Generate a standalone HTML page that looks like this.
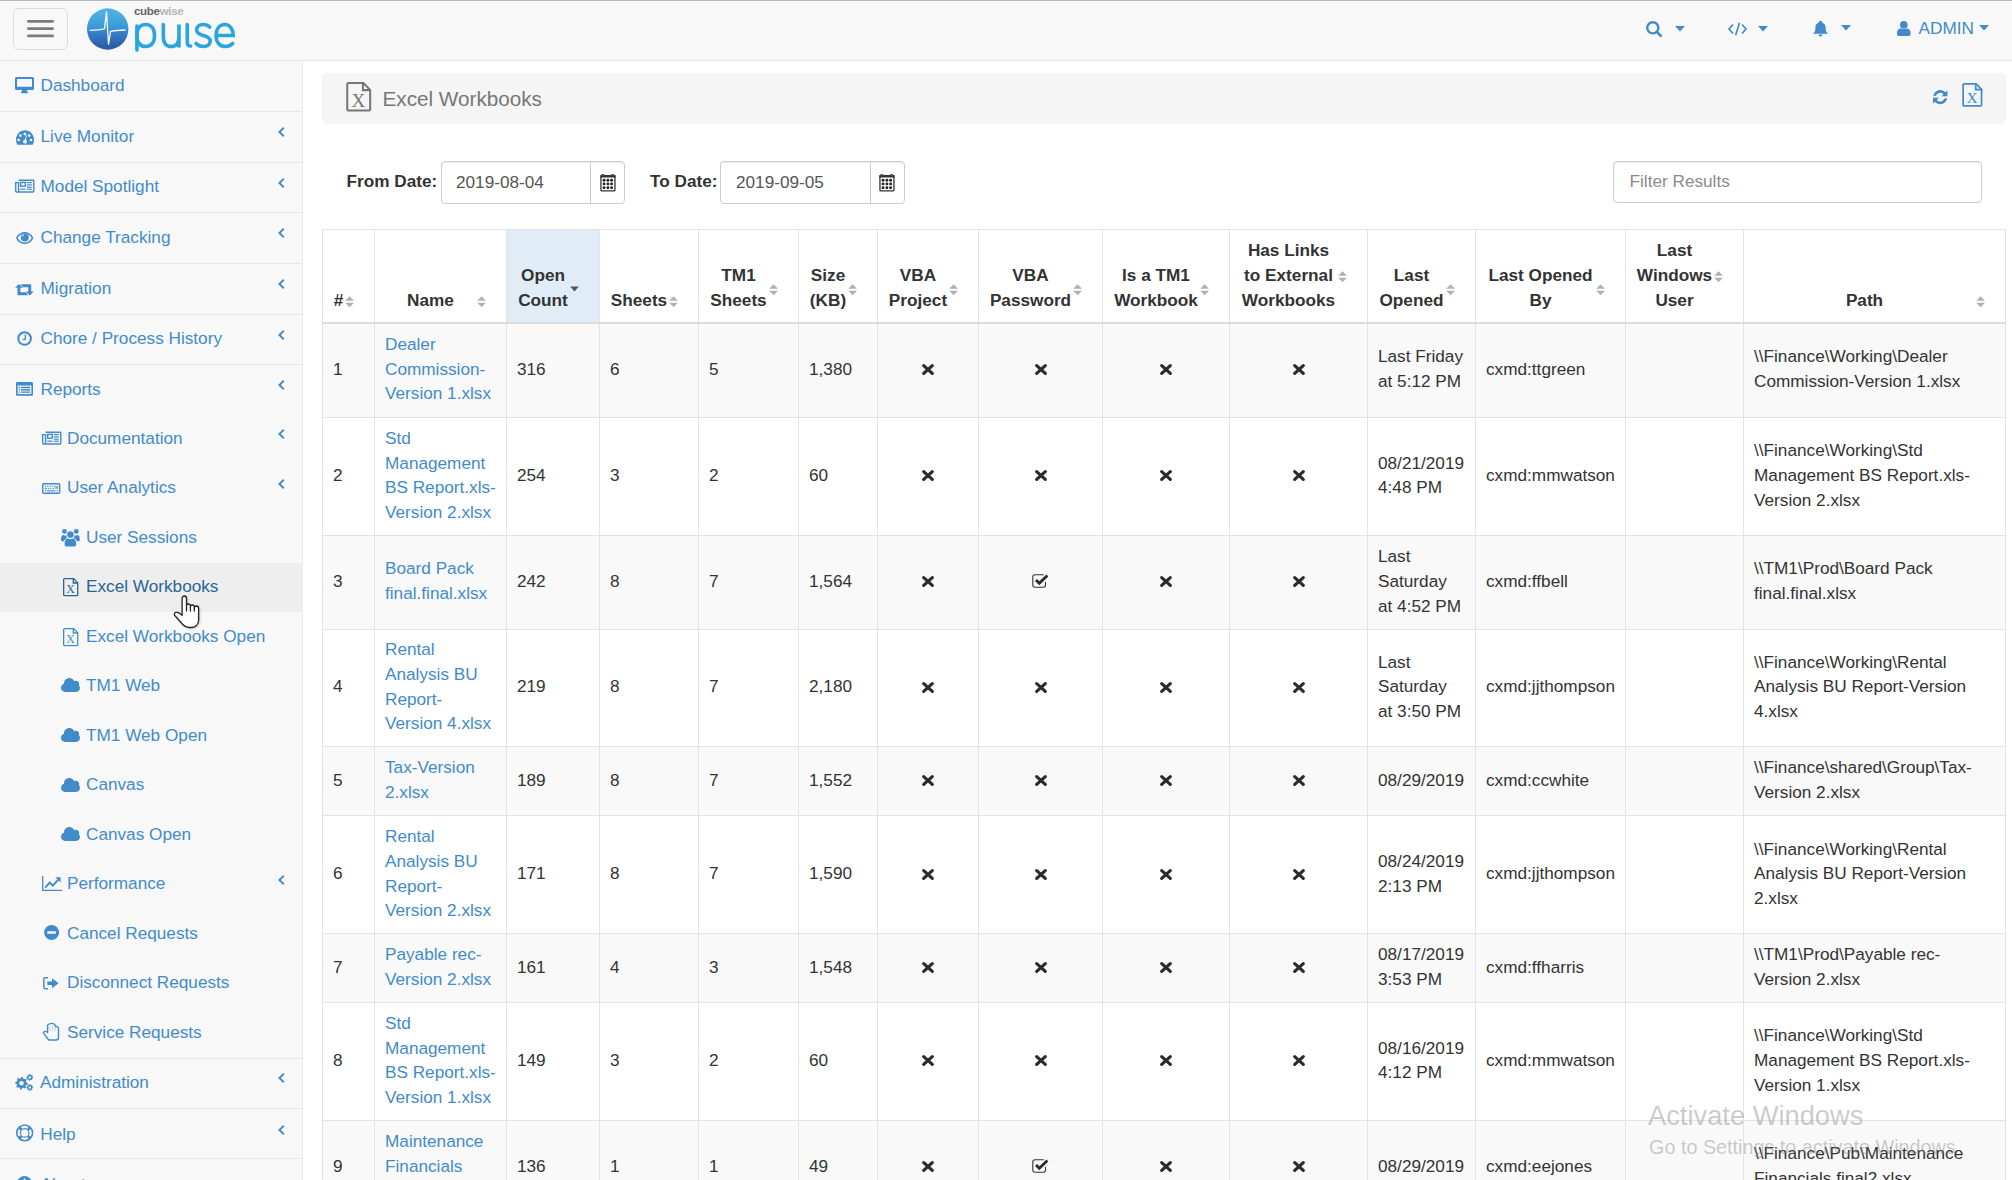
<!DOCTYPE html><html><head><meta charset="utf-8"><title>Excel Workbooks</title><style>
*{box-sizing:border-box;}
html,body{margin:0;padding:0;}
body{width:2012px;height:1180px;overflow:hidden;position:relative;background:#fff;
font-family:"Liberation Sans",sans-serif;font-size:17.2px;color:#333;}
.abs{position:absolute;}
svg{position:absolute;display:block;overflow:visible;}
#topline{left:0;top:0;width:2012px;height:1px;background:#b9b9b9;}
#hdr{left:0;top:1px;width:2012px;height:60px;background:#f8f8f8;border-bottom:1px solid #e6e6e6;}
#side{left:0;top:61px;width:303px;height:1119px;background:#f8f8f8;border-right:1px solid #eaeaea;}
.sep{position:absolute;left:0;width:302px;height:1px;background:#e7e7e7;}
.it{position:absolute;white-space:nowrap;line-height:24px;height:24px;color:#428bca;}
.chev{position:absolute;left:278px;}
.ttl{position:absolute;left:322px;top:73px;width:1684px;height:51px;background:#f5f5f5;border-radius:5px;}
.lbl{position:absolute;font-weight:bold;white-space:nowrap;line-height:24px;}
.inp{position:absolute;border:1px solid #ccc;border-radius:4px;background:#fff;box-shadow:inset 0 1px 1px rgba(0,0,0,.075);}
.inp .tx{position:absolute;line-height:24px;white-space:nowrap;color:#555;}
.inp .dv{position:absolute;top:0;bottom:0;width:1px;background:#ccc;}
table.dt{position:absolute;left:322px;top:229px;border-collapse:collapse;table-layout:fixed;width:1684px;}
table.dt th,table.dt td{border:1px solid #e3e3e3;padding:0 10px;line-height:24.7px;white-space:nowrap;overflow:visible;}
table.dt th{font-weight:bold;text-align:center;vertical-align:bottom;padding-bottom:9px;border-bottom:2px solid #dcdcdc;color:#333;}
table.dt th .in{position:relative;padding-right:20px;}
table.dt th .so{position:absolute;right:10px;top:50%;margin-top:-4px;width:9px;height:12px;}
table.dt th.sorted{background:#e1edf6;}
table.dt td{vertical-align:middle;text-align:left;padding-bottom:2.4px;}
table.dt tr.odd td{background:#f9f9f9;}
table.dt tr.even td{background:#fff;}
table.dt td.c{text-align:center;}
table.dt a{color:#428bca;text-decoration:none;}
#wm1{position:absolute;left:1648px;top:1099px;font-size:27.3px;line-height:34px;color:rgba(130,130,130,.42);white-space:nowrap;}
#wm2{position:absolute;left:1649px;top:1134px;font-size:19.8px;line-height:26px;color:rgba(130,130,130,.42);white-space:nowrap;}
</style></head><body><div id="topline" class="abs"></div>
<div id="hdr" class="abs"></div>
<div class="abs" style="left:13px;top:8px;width:55px;height:42px;border:1px solid #dcdcdc;border-radius:6px;"></div>
<svg style="left:26px;top:18px;width:29px;height:21px" viewBox="0 0 29 21" ><path d="M2.35 3.40 H26.65" stroke="#7c7c7c" stroke-width="2.7" stroke-linecap="round"/><path d="M2.35 10.60 H26.65" stroke="#7c7c7c" stroke-width="2.7" stroke-linecap="round"/><path d="M2.35 17.90 H26.65" stroke="#7c7c7c" stroke-width="2.7" stroke-linecap="round"/></svg>
<svg style="left:87px;top:8px;width:41.4px;height:42px" viewBox="0 0 41.4 42" ><defs><linearGradient id="lg" x1="0" y1="0" x2="0" y2="1">
<stop offset="0" stop-color="#4fb6e6"/><stop offset="0.45" stop-color="#3a9ad8"/><stop offset="0.55" stop-color="#3585cc"/><stop offset="1" stop-color="#2a55a0"/></linearGradient></defs>
<circle cx="20.7" cy="21" r="20.7" fill="url(#lg)"/>
<path d="M2.5 22.3 C8 22.2 13 22 17.5 20.8 L19.5 3.8 L21.5 36.2 L23.5 23.3 C27 22.2 32 22.4 38.7 22.0" fill="none" stroke="#fff" stroke-width="1.3" stroke-linejoin="round" opacity="0.95"/></svg>
<div class="abs" style="left:134px;top:4px;font-size:11.5px;font-weight:bold;line-height:14px;letter-spacing:-0.3px;white-space:nowrap;"><span style="color:#666">cube</span><span style="color:#b5b5b5">wise</span></div>
<svg style="left:135px;top:23px;width:102px;height:30px" viewBox="0 0 102 30" ><g fill="none" stroke="#29a6de" stroke-width="3.7" stroke-linecap="round" transform="scale(0.977 1)">
<path d="M2 3 V27"/><path d="M2 12 C2 5 6 1.5 11 1.5 C16.5 1.5 20 5.5 20 12.5 C20 19.5 16.5 23.5 11 23.5 C6 23.5 2 20 2 13"/>
<path d="M29 1.5 V14 C29 20 32 23.5 37 23.5 C42 23.5 45 20 45 14 V1.5 V23"/>
<path d="M53.5 1.5 V19 C53.5 22 54.5 23 57 23"/>
<path d="M76.5 4 C74.5 2 72 1.5 69.5 1.5 C66 1.5 63 3.5 63 7 C63 10.5 66 11.5 70 12.5 C74 13.5 77 14.5 77 18 C77 21.5 74 23.5 70 23.5 C67 23.5 64.5 22.5 62.5 20.5"/>
<path d="M84 12.5 H100.5 C100.5 6 97 1.5 92 1.5 C86.5 1.5 83 6 83 12.5 C83 19 86.5 23.5 92.5 23.5 C95.5 23.5 98 22.5 100 20.5"/>
</g></svg>
<svg style="left:1645px;top:20px;width:18px;height:18px" viewBox="0 0 18 18" ><circle cx="7.8" cy="7.8" r="5.6" fill="none" stroke="#428bca" stroke-width="2.4"/><path d="M11.8 11.8 L15.8 15.8" stroke="#428bca" stroke-width="2.6" stroke-linecap="round"/></svg>
<svg style="left:1675px;top:25.5px;width:10px;height:5.6px" viewBox="0 0 10 5.6" ><path d="M0 0 H10 L5.0 5.6 Z" fill="#428bca"/></svg>
<svg style="left:1728px;top:22px;width:19px;height:14px" viewBox="0 0 19 14" ><g fill="none" stroke="#428bca" stroke-width="1.7"><path d="M5 2.5 L1 7 L5 11.5"/><path d="M14 2.5 L18 7 L14 11.5"/><path d="M11.5 0.8 L7.6 13.2"/></g></svg>
<svg style="left:1758px;top:25.5px;width:10px;height:5.6px" viewBox="0 0 10 5.6" ><path d="M0 0 H10 L5.0 5.6 Z" fill="#428bca"/></svg>
<svg style="left:1812px;top:20px;width:17px;height:17px" viewBox="0 0 17 17" ><path d="M8.5 0.8 C9.6 0.8 10.2 1.6 10.2 2.4 C12.8 3.2 13.7 5.6 13.7 8.4 C13.7 11.2 14.6 12.4 16.2 13.8 H0.8 C2.4 12.4 3.3 11.2 3.3 8.4 C3.3 5.6 4.2 3.2 6.8 2.4 C6.8 1.6 7.4 0.8 8.5 0.8 Z M6.6 14.5 H10.4 C10.4 15.6 9.6 16.6 8.5 16.6 C7.4 16.6 6.6 15.6 6.6 14.5 Z" fill="#428bca"/></svg>
<svg style="left:1841px;top:25.4px;width:10px;height:5.6px" viewBox="0 0 10 5.6" ><path d="M0 0 H10 L5.0 5.6 Z" fill="#428bca"/></svg>
<svg style="left:1897px;top:21px;width:14px;height:15px" viewBox="0 0 14 15" ><circle cx="6.8" cy="3.9" r="3.8" fill="#428bca"/><path d="M0 13 C0 9 1.5 7.6 4 7.6 C5 8.3 8.6 8.3 9.6 7.6 C12.1 7.6 13.6 9 13.6 13 C13.6 14.3 12.8 15 11.8 15 H1.8 C0.8 15 0 14.3 0 13 Z" fill="#428bca"/></svg>
<div class="abs" style="left:1918.5px;top:16.3px;line-height:24px;font-size:17.2px;color:#428bca;white-space:nowrap;">ADMIN</div>
<svg style="left:1979px;top:25.4px;width:10px;height:5.6px" viewBox="0 0 10 5.6" ><path d="M0 0 H10 L5.0 5.6 Z" fill="#428bca"/></svg>
<div id="side" class="abs"></div>
<div class="sep" style="top:111px"></div>
<div class="sep" style="top:162px"></div>
<div class="sep" style="top:212px"></div>
<div class="sep" style="top:263px"></div>
<div class="sep" style="top:314px"></div>
<div class="sep" style="top:364px"></div>
<div class="sep" style="top:1058px"></div>
<div class="sep" style="top:1108px"></div>
<div class="sep" style="top:1158px"></div>
<div class="abs" style="left:0;top:563.3px;width:302px;height:48.7px;background:#eeeeee;"></div>
<div class="it" style="left:40.5px;top:73.15px;color:#428bca">Dashboard</div>
<div class="it" style="left:40.5px;top:123.79px;color:#428bca">Live Monitor</div>
<svg style="left:278px;top:126.99000000000001px;width:7px;height:10px" viewBox="0 0 7 10" ><path d="M5.8 0.8 L1.4 5 L5.8 9.2" fill="none" stroke="#428bca" stroke-width="1.9"/></svg>
<div class="it" style="left:40.5px;top:174.43px;color:#428bca">Model Spotlight</div>
<svg style="left:278px;top:177.63000000000002px;width:7px;height:10px" viewBox="0 0 7 10" ><path d="M5.8 0.8 L1.4 5 L5.8 9.2" fill="none" stroke="#428bca" stroke-width="1.9"/></svg>
<div class="it" style="left:40.5px;top:225.07px;color:#428bca">Change Tracking</div>
<svg style="left:278px;top:228.27px;width:7px;height:10px" viewBox="0 0 7 10" ><path d="M5.8 0.8 L1.4 5 L5.8 9.2" fill="none" stroke="#428bca" stroke-width="1.9"/></svg>
<div class="it" style="left:40.5px;top:275.71px;color:#428bca">Migration</div>
<svg style="left:278px;top:278.90999999999997px;width:7px;height:10px" viewBox="0 0 7 10" ><path d="M5.8 0.8 L1.4 5 L5.8 9.2" fill="none" stroke="#428bca" stroke-width="1.9"/></svg>
<div class="it" style="left:40.5px;top:326.35px;color:#428bca">Chore / Process History</div>
<svg style="left:278px;top:329.54999999999995px;width:7px;height:10px" viewBox="0 0 7 10" ><path d="M5.8 0.8 L1.4 5 L5.8 9.2" fill="none" stroke="#428bca" stroke-width="1.9"/></svg>
<div class="it" style="left:40.5px;top:376.99px;color:#428bca">Reports</div>
<svg style="left:278px;top:380.19px;width:7px;height:10px" viewBox="0 0 7 10" ><path d="M5.8 0.8 L1.4 5 L5.8 9.2" fill="none" stroke="#428bca" stroke-width="1.9"/></svg>
<div class="it" style="left:67px;top:425.80px;color:#428bca">Documentation</div>
<svg style="left:278px;top:429.0px;width:7px;height:10px" viewBox="0 0 7 10" ><path d="M5.8 0.8 L1.4 5 L5.8 9.2" fill="none" stroke="#428bca" stroke-width="1.9"/></svg>
<div class="it" style="left:67px;top:475.30px;color:#428bca">User Analytics</div>
<svg style="left:278px;top:478.5px;width:7px;height:10px" viewBox="0 0 7 10" ><path d="M5.8 0.8 L1.4 5 L5.8 9.2" fill="none" stroke="#428bca" stroke-width="1.9"/></svg>
<div class="it" style="left:86px;top:524.80px;color:#428bca">User Sessions</div>
<div class="it" style="left:86px;top:574.30px;color:#2a6496">Excel Workbooks</div>
<div class="it" style="left:86px;top:623.80px;color:#428bca">Excel Workbooks Open</div>
<div class="it" style="left:86px;top:673.30px;color:#428bca">TM1 Web</div>
<div class="it" style="left:86px;top:722.80px;color:#428bca">TM1 Web Open</div>
<div class="it" style="left:86px;top:772.30px;color:#428bca">Canvas</div>
<div class="it" style="left:86px;top:821.80px;color:#428bca">Canvas Open</div>
<div class="it" style="left:67px;top:871.30px;color:#428bca">Performance</div>
<svg style="left:278px;top:874.5px;width:7px;height:10px" viewBox="0 0 7 10" ><path d="M5.8 0.8 L1.4 5 L5.8 9.2" fill="none" stroke="#428bca" stroke-width="1.9"/></svg>
<div class="it" style="left:67px;top:920.80px;color:#428bca">Cancel Requests</div>
<div class="it" style="left:67px;top:970.30px;color:#428bca">Disconnect Requests</div>
<div class="it" style="left:67px;top:1019.80px;color:#428bca">Service Requests</div>
<div class="it" style="left:40px;top:1070.00px;color:#428bca">Administration</div>
<svg style="left:278px;top:1073.2px;width:7px;height:10px" viewBox="0 0 7 10" ><path d="M5.8 0.8 L1.4 5 L5.8 9.2" fill="none" stroke="#428bca" stroke-width="1.9"/></svg>
<div class="it" style="left:40.3px;top:1121.60px;color:#428bca">Help</div>
<svg style="left:278px;top:1124.8000000000002px;width:7px;height:10px" viewBox="0 0 7 10" ><path d="M5.8 0.8 L1.4 5 L5.8 9.2" fill="none" stroke="#428bca" stroke-width="1.9"/></svg>
<div class="it" style="left:40.5px;top:1172.00px;color:#428bca">About</div>
<svg style="left:15px;top:76.5px;width:19px;height:16.5px" viewBox="0 0 19 16.5" ><path fill="#428bca" fill-rule="evenodd" d="M1.5 0 H17.5 C18.3 0 19 0.7 19 1.5 V11.5 C19 12.3 18.3 13 17.5 13 H12 V15 H7 V13 H1.5 C0.7 13 0 12.3 0 11.5 V1.5 C0 0.7 0.7 0 1.5 0 Z M2 2 V9.8 H17 V2 Z"/><rect x="6" y="14.6" width="7" height="1.7" rx="0.5" fill="#428bca"/></svg>
<svg style="left:15.5px;top:129.5px;width:18px;height:15px" viewBox="0 0 18 15" ><path fill="#428bca" fill-rule="evenodd" d="M9 0.3 C14 0.3 18 4.5 18 9.8 C18 11.6 17.5 13.3 16.7 14.7 H1.3 C0.5 13.3 0 11.6 0 9.8 C0 4.5 4 0.3 9 0.3 Z M9 3 A1.2 1.2 0 1 0 9.01 3 Z"/><g fill="#f8f8f8"><circle cx="8.8" cy="3.8" r="1.3"/><circle cx="4.4" cy="5.6" r="1.3"/><circle cx="13.2" cy="5.6" r="1.3"/><circle cx="2.6" cy="10" r="1.3"/><circle cx="15" cy="10" r="1.3"/><circle cx="9" cy="11.7" r="1.9"/><path d="M8.4 11.5 L10.3 5 L10.9 5.2 L9.6 11.8 Z"/></g></svg>
<svg style="left:15px;top:179px;width:19.5px;height:14px" viewBox="0 0 19.5 14" ><g fill="none" stroke="#428bca" stroke-width="1.4"><path d="M3.6 1.2 H18.1 C18.5 1.2 18.8 1.5 18.8 1.9 V12.1 C18.8 12.6 18.4 13 17.9 13 H1.9 C1.2 13 0.7 12.5 0.7 11.8 V3.6 H3.6 V12.6"/><rect x="5.7" y="3.4" width="4.6" height="3.8"/></g><g fill="#428bca"><rect x="11.8" y="3" width="5" height="1.2"/><rect x="11.8" y="5.3" width="5" height="1.2"/><rect x="11.8" y="7.6" width="5" height="1.2"/><rect x="5.2" y="9.6" width="5.3" height="1.2"/><rect x="11.8" y="9.6" width="5" height="1.2"/></g></svg>
<svg style="left:15.9px;top:231.7px;width:17.4px;height:12.1px" viewBox="0 0 17.4 12.1" ><path fill="#428bca" fill-rule="evenodd" d="M8.7 0 C12.6 0 15.8 2.4 17.4 6.05 C15.8 9.7 12.6 12.1 8.7 12.1 C4.8 12.1 1.6 9.7 0 6.05 C1.6 2.4 4.8 0 8.7 0 Z M8.7 1.5 C5.6 1.5 3.1 3.3 1.7 6.05 C3.1 8.8 5.6 10.6 8.7 10.6 C11.8 10.6 14.3 8.8 15.7 6.05 C14.3 3.3 11.8 1.5 8.7 1.5 Z"/><circle cx="8.8" cy="5.6" r="4" fill="#428bca"/><path d="M6.3 4.6 C6.6 3.5 7.2 3 8 2.6" stroke="#f8f8f8" stroke-width="0.9" fill="none"/></svg>
<svg style="left:15.3px;top:283.5px;width:18.7px;height:11.4px" viewBox="0 0 18.7 11.4" ><g fill="#428bca"><path d="M4 0 L7.8 3.8 H5.4 V8.2 H11 L13 11.2 H3.3 C2.8 11.2 2.5 10.9 2.5 10.4 V3.8 H0 Z"/><path d="M14.7 11.4 L10.9 7.6 H13.3 V3.2 H7.7 L5.7 0.2 H15.4 C15.9 0.2 16.2 0.5 16.2 1 V7.6 H18.7 Z"/></g></svg>
<svg style="left:17px;top:331px;width:15.2px;height:15px" viewBox="0 0 15.2 15" ><circle cx="7.6" cy="7.5" r="6.3" fill="none" stroke="#428bca" stroke-width="2"/><path d="M8.3 3.5 V8.3 H5.6" fill="none" stroke="#428bca" stroke-width="1.3"/></svg>
<svg style="left:16.2px;top:381.7px;width:17px;height:13.7px" viewBox="0 0 17 13.7" ><path fill="#428bca" fill-rule="evenodd" d="M1.3 0 H15.7 C16.4 0 17 0.6 17 1.3 V12.4 C17 13.1 16.4 13.7 15.7 13.7 H1.3 C0.6 13.7 0 13.1 0 12.4 V1.3 C0 0.6 0.6 0 1.3 0 Z M1.6 3.6 V12.1 H15.4 V3.6 Z"/><g fill="#428bca"><rect x="4.9" y="4.7" width="9.3" height="1.5"/><rect x="4.9" y="7.1" width="9.3" height="1.5"/><rect x="4.9" y="9.5" width="9.3" height="1.3"/><rect x="2.5" y="4.8" width="1.4" height="1.3"/><rect x="2.5" y="7.2" width="1.4" height="1.3"/><rect x="2.5" y="9.5" width="1.4" height="1.3"/></g></svg>
<svg style="left:42px;top:431px;width:19.5px;height:14px" viewBox="0 0 19.5 14" ><g fill="none" stroke="#428bca" stroke-width="1.4"><path d="M3.6 1.2 H18.1 C18.5 1.2 18.8 1.5 18.8 1.9 V12.1 C18.8 12.6 18.4 13 17.9 13 H1.9 C1.2 13 0.7 12.5 0.7 11.8 V3.6 H3.6 V12.6"/><rect x="5.7" y="3.4" width="4.6" height="3.8"/></g><g fill="#428bca"><rect x="11.8" y="3" width="5" height="1.2"/><rect x="11.8" y="5.3" width="5" height="1.2"/><rect x="11.8" y="7.6" width="5" height="1.2"/><rect x="5.2" y="9.6" width="5.3" height="1.2"/><rect x="11.8" y="9.6" width="5" height="1.2"/></g></svg>
<svg style="left:42.4px;top:483px;width:18.4px;height:11px" viewBox="0 0 18.4 11" ><rect x="0.7" y="0.7" width="17" height="9.6" rx="1.2" fill="none" stroke="#428bca" stroke-width="1.4"/><g fill="#428bca" opacity="0.85"><rect x="2.8" y="2.6" width="1.3" height="1.3"/><rect x="5.2" y="2.6" width="1.3" height="1.3"/><rect x="7.6" y="2.6" width="1.3" height="1.3"/><rect x="10" y="2.6" width="1.3" height="1.3"/><rect x="12.4" y="2.6" width="1.3" height="1.3"/><rect x="14.6" y="2.6" width="1.3" height="2.8"/><rect x="2.8" y="4.9" width="2.2" height="1.3"/><rect x="6" y="4.9" width="1.3" height="1.3"/><rect x="8.4" y="4.9" width="1.3" height="1.3"/><rect x="10.8" y="4.9" width="1.3" height="1.3"/><rect x="13" y="4.3" width="2.9" height="1.3"/><rect x="2.8" y="7.2" width="1.3" height="1.3"/><rect x="5" y="7.2" width="8.4" height="1.3"/><rect x="14.4" y="7.2" width="1.3" height="1.3"/></g></svg>
<svg style="left:61px;top:528.8px;width:18.8px;height:17.6px" viewBox="0 0 18.8 17.6" ><g fill="#428bca"><circle cx="9.4" cy="5.6" r="3.3"/><path d="M3.6 15.2 C3.6 11.2 5.4 9.6 7.2 9.6 C8.5 10.3 10.3 10.3 11.6 9.6 C13.4 9.6 15.2 11.2 15.2 15.2 C15.2 16.7 14.4 17.6 13 17.6 H5.8 C4.4 17.6 3.6 16.7 3.6 15.2 Z"/><circle cx="3.5" cy="2.4" r="2.4"/><circle cx="15.3" cy="2.4" r="2.4"/><path d="M0 10.6 C0 7.2 0.9 6 2.3 6 C3.3 6.7 4.8 6.7 5.6 6.4 C5.2 7.2 5.6 8.4 6.3 9 C4.4 9.6 3.2 11.1 3 12.2 H1.2 C0.5 12.2 0 11.6 0 10.6 Z"/><path d="M18.8 10.6 C18.8 7.2 17.9 6 16.5 6 C15.5 6.7 14 6.7 13.2 6.4 C13.6 7.2 13.2 8.4 12.5 9 C14.4 9.6 15.6 11.1 15.8 12.2 H17.6 C18.3 12.2 18.8 11.6 18.8 10.6 Z"/></g></svg>
<svg style="left:62.7px;top:577.8px;width:15.4px;height:18.2px" viewBox="0 0 15.4 18.2" ><g fill="none" stroke="#2a6496" stroke-width="1.3"><path d="M1.2 0.65 H10.6 L14.75 4.8 V16.8 C14.75 17.2 14.4 17.55 14 17.55 H1.4 C1 17.55 0.65 17.2 0.65 16.8 V1.4 C0.65 1 1 0.65 1.4 0.65 Z"/><path d="M10.3 0.9 V5 H14.5"/></g><text x="7.5" y="15.3" text-anchor="middle" font-family="Liberation Serif" font-size="11.8" fill="#2a6496">X</text></svg>
<svg style="left:62.7px;top:627.6px;width:15.4px;height:18.2px" viewBox="0 0 15.4 18.2" ><g fill="none" stroke="#428bca" stroke-width="1.3"><path d="M1.2 0.65 H10.6 L14.75 4.8 V16.8 C14.75 17.2 14.4 17.55 14 17.55 H1.4 C1 17.55 0.65 17.2 0.65 16.8 V1.4 C0.65 1 1 0.65 1.4 0.65 Z"/><path d="M10.3 0.9 V5 H14.5"/></g><text x="7.5" y="15.3" text-anchor="middle" font-family="Liberation Serif" font-size="11.8" fill="#428bca">X</text></svg>
<svg style="left:60.8px;top:678.4px;width:19px;height:14px" viewBox="0 0 19 14" ><path fill="#428bca" d="M4.2 14 C1.9 14 0 12.1 0 9.8 C0 7.9 1.3 6.3 3 5.8 C3 5.7 3 5.5 3 5.4 C3 2.4 5.4 0 8.4 0 C10.6 0 12.5 1.3 13.3 3.2 C13.8 2.9 14.4 2.8 15 2.8 C16.8 2.8 18.2 4.2 18.2 6 C18.2 6.5 18.1 6.9 17.9 7.3 C18.6 8 19 9 19 10.1 C19 12.3 17.3 14 15.1 14 Z"/></svg>
<svg style="left:60.8px;top:728px;width:19px;height:14px" viewBox="0 0 19 14" ><path fill="#428bca" d="M4.2 14 C1.9 14 0 12.1 0 9.8 C0 7.9 1.3 6.3 3 5.8 C3 5.7 3 5.5 3 5.4 C3 2.4 5.4 0 8.4 0 C10.6 0 12.5 1.3 13.3 3.2 C13.8 2.9 14.4 2.8 15 2.8 C16.8 2.8 18.2 4.2 18.2 6 C18.2 6.5 18.1 6.9 17.9 7.3 C18.6 8 19 9 19 10.1 C19 12.3 17.3 14 15.1 14 Z"/></svg>
<svg style="left:60.8px;top:777.5px;width:19px;height:14px" viewBox="0 0 19 14" ><path fill="#428bca" d="M4.2 14 C1.9 14 0 12.1 0 9.8 C0 7.9 1.3 6.3 3 5.8 C3 5.7 3 5.5 3 5.4 C3 2.4 5.4 0 8.4 0 C10.6 0 12.5 1.3 13.3 3.2 C13.8 2.9 14.4 2.8 15 2.8 C16.8 2.8 18.2 4.2 18.2 6 C18.2 6.5 18.1 6.9 17.9 7.3 C18.6 8 19 9 19 10.1 C19 12.3 17.3 14 15.1 14 Z"/></svg>
<svg style="left:60.8px;top:827px;width:19px;height:14px" viewBox="0 0 19 14" ><path fill="#428bca" d="M4.2 14 C1.9 14 0 12.1 0 9.8 C0 7.9 1.3 6.3 3 5.8 C3 5.7 3 5.5 3 5.4 C3 2.4 5.4 0 8.4 0 C10.6 0 12.5 1.3 13.3 3.2 C13.8 2.9 14.4 2.8 15 2.8 C16.8 2.8 18.2 4.2 18.2 6 C18.2 6.5 18.1 6.9 17.9 7.3 C18.6 8 19 9 19 10.1 C19 12.3 17.3 14 15.1 14 Z"/></svg>
<svg style="left:41.6px;top:876px;width:20.1px;height:15px" viewBox="0 0 20.1 15" ><path d="M0.7 0 V14.3 H20.1" fill="none" stroke="#428bca" stroke-width="1.3"/><path d="M3.2 11.6 L7.6 6.6 L10.8 9.6 L16.2 3.6" fill="none" stroke="#428bca" stroke-width="2"/><path d="M13.4 1.3 H18.6 V6.5 Z" fill="#428bca"/></svg>
<svg style="left:44.1px;top:925.4px;width:15.2px;height:15px" viewBox="0 0 15.2 15" ><circle cx="7.6" cy="7.5" r="7.5" fill="#428bca"/><rect x="3.3" y="6.2" width="8.6" height="2.6" rx="0.3" fill="#f8f8f8"/></svg>
<svg style="left:43.2px;top:976.5px;width:15.7px;height:12.5px" viewBox="0 0 15.7 12.5" ><path d="M5 0.8 H2.2 C1.4 0.8 0.8 1.4 0.8 2.2 V10.3 C0.8 11.1 1.4 11.7 2.2 11.7 H5" fill="none" stroke="#428bca" stroke-width="1.5"/><path d="M4.3 4.5 H9 V1.2 L15.7 6.25 L9 11.3 V8 H4.3 Z" fill="#428bca"/></svg>
<svg style="left:43px;top:1023px;width:16.1px;height:17.7px" viewBox="0 0 16.1 17.7" ><path d="M4.6 9.5 V2.6 C4.6 1.7 5.8 1.0 6.6 0.9 L8.9 0.4 C9.8 0.3 11.3 0.9 12.2 2.2 L12.5 3.5 C13 3.4 13.5 3.4 14.2 3.6 C15.2 4 15.5 4.8 15.5 5.8 V14.5 C15.5 16 14.5 17 13.2 17 H6.6 C5.9 17 5.3 16.6 4.9 16 L0.9 10.6 C0.4 9.9 0.6 8.7 1.6 8.5 C2.6 8.2 3.6 8.6 4.6 9.5 Z" fill="none" stroke="#428bca" stroke-width="1.4" stroke-linejoin="round"/><path d="M6.9 3.3 V8.5 M9.6 2.5 V8.5 M12.1 3.5 V8.5" stroke="#428bca" stroke-width="0.7" opacity="0.45"/></svg>
<svg style="left:15.4px;top:1073.8px;width:18.5px;height:17px" viewBox="0 0 18.5 17" ><path fill="#428bca" fill-rule="evenodd" d="M12.80 9.20 L12.68 10.43 L10.93 11.04 L10.49 11.87 L10.95 13.65 L10.00 14.44 L8.34 13.63 L7.44 13.91 L6.50 15.50 L5.27 15.38 L4.66 13.63 L3.83 13.19 L2.05 13.65 L1.26 12.70 L2.07 11.04 L1.79 10.14 L0.20 9.20 L0.32 7.97 L2.07 7.36 L2.51 6.53 L2.05 4.75 L3.00 3.96 L4.66 4.77 L5.56 4.49 L6.50 2.90 L7.73 3.02 L8.34 4.77 L9.17 5.21 L10.95 4.75 L11.74 5.70 L10.93 7.36 L11.21 8.26 Z M8.80 9.20 A2.3 2.3 0 1 0 4.20 9.20 A2.3 2.3 0 1 0 8.80 9.20 Z"/><path fill="#428bca" fill-rule="evenodd" d="M18.30 3.40 L18.23 4.08 L17.20 4.39 L16.96 4.84 L17.27 5.87 L16.74 6.31 L15.79 5.80 L15.31 5.95 L14.80 6.90 L14.12 6.83 L13.81 5.80 L13.36 5.56 L12.33 5.87 L11.89 5.34 L12.40 4.39 L12.25 3.91 L11.30 3.40 L11.37 2.72 L12.40 2.41 L12.64 1.96 L12.33 0.93 L12.86 0.49 L13.81 1.00 L14.29 0.85 L14.80 -0.10 L15.48 -0.03 L15.79 1.00 L16.24 1.24 L17.27 0.93 L17.71 1.46 L17.20 2.41 L17.35 2.89 Z M16.00 3.40 A1.2 1.2 0 1 0 13.60 3.40 A1.2 1.2 0 1 0 16.00 3.40 Z"/><path fill="#428bca" fill-rule="evenodd" d="M18.30 13.40 L18.23 14.08 L17.20 14.39 L16.96 14.84 L17.27 15.87 L16.74 16.31 L15.79 15.80 L15.31 15.95 L14.80 16.90 L14.12 16.83 L13.81 15.80 L13.36 15.56 L12.33 15.87 L11.89 15.34 L12.40 14.39 L12.25 13.91 L11.30 13.40 L11.37 12.72 L12.40 12.41 L12.64 11.96 L12.33 10.93 L12.86 10.49 L13.81 11.00 L14.29 10.85 L14.80 9.90 L15.48 9.97 L15.79 11.00 L16.24 11.24 L17.27 10.93 L17.71 11.46 L17.20 12.41 L17.35 12.89 Z M16.00 13.40 A1.2 1.2 0 1 0 13.60 13.40 A1.2 1.2 0 1 0 16.00 13.40 Z"/></svg>
<svg style="left:16px;top:1124px;width:17.4px;height:17.8px" viewBox="0 0 17.4 17.8" ><circle cx="8.7" cy="8.9" r="8.7" fill="#428bca"/><circle cx="8.7" cy="8.9" r="3.7" fill="#f8f8f8"/><path d="M14.64 5.19 A7.0 7.0 0 0 1 14.64 12.61 L12.86 11.50 A4.9 4.9 0 0 0 12.86 6.30 Z M12.41 14.84 A7.0 7.0 0 0 1 4.99 14.84 L6.10 13.06 A4.9 4.9 0 0 0 11.30 13.06 Z M2.76 12.61 A7.0 7.0 0 0 1 2.76 5.19 L4.54 6.30 A4.9 4.9 0 0 0 4.54 11.50 Z M4.99 2.96 A7.0 7.0 0 0 1 12.41 2.96 L11.30 4.74 A4.9 4.9 0 0 0 6.10 4.74 Z" fill="#f8f8f8"/></svg>
<svg style="left:17px;top:1176px;width:15px;height:15px" viewBox="0 0 15 15" ><circle cx="7.5" cy="7.5" r="7.5" fill="#428bca"/><rect x="6.6" y="2.5" width="1.8" height="1.8" fill="#f8f8f8"/></svg>
<div class="ttl"></div>
<svg style="left:346px;top:81.6px;width:25.4px;height:29.6px" viewBox="0 0 15.4 18.2" ><g fill="none" stroke="#777" stroke-width="1.25"><path d="M1.2 0.65 H10.6 L14.75 4.8 V16.8 C14.75 17.2 14.4 17.55 14 17.55 H1.4 C1 17.55 0.65 17.2 0.65 16.8 V1.4 C0.65 1 1 0.65 1.4 0.65 Z"/><path d="M10.3 0.9 V5 H14.5"/></g><text x="7.5" y="15.3" text-anchor="middle" font-family="Liberation Serif" font-size="11.8" fill="#777">X</text></svg>
<div class="abs" style="left:382.5px;top:85.3px;font-size:20.7px;line-height:28px;color:#777;white-space:nowrap;">Excel Workbooks</div>
<svg style="left:1931.6px;top:89.2px;width:16.4px;height:16.2px" viewBox="0 0 16.4 16.2" ><g fill="#428bca" transform="scale(1.08)"><path d="M1.2 6.4 C1.8 3.2 4.4 0.9 7.6 0.9 C9.6 0.9 11.3 1.8 12.5 3.1 L14.3 1.3 V6.8 H8.8 L10.7 4.9 C9.9 4 8.8 3.4 7.6 3.4 C5.8 3.4 4.3 4.6 3.8 6.3 Z"/><path d="M14 8.6 C13.4 11.8 10.8 14.1 7.6 14.1 C5.6 14.1 3.9 13.2 2.7 11.9 L0.9 13.7 V8.2 H6.4 L4.5 10.1 C5.3 11 6.4 11.6 7.6 11.6 C9.4 11.6 10.9 10.4 11.4 8.7 Z"/></g></svg>
<svg style="left:1962.1px;top:82.9px;width:20.7px;height:23.8px" viewBox="0 0 15.4 18.2" ><g fill="none" stroke="#428bca" stroke-width="1.3"><path d="M1.2 0.65 H10.6 L14.75 4.8 V16.8 C14.75 17.2 14.4 17.55 14 17.55 H1.4 C1 17.55 0.65 17.2 0.65 16.8 V1.4 C0.65 1 1 0.65 1.4 0.65 Z"/><path d="M10.3 0.9 V5 H14.5"/></g><text x="7.5" y="15.3" text-anchor="middle" font-family="Liberation Serif" font-size="11.8" fill="#428bca">X</text></svg>
<div class="lbl" style="left:346.5px;top:168.5px;">From Date:</div>
<div class="inp" style="left:441px;top:161px;width:184px;height:43px;"><div class="tx" style="left:14px;top:7.5px;">2019-08-04</div><div class="dv" style="left:148px"></div></div>
<div class="lbl" style="left:650px;top:168.5px;">To Date:</div>
<div class="inp" style="left:720px;top:161px;width:185px;height:43px;"><div class="tx" style="left:15px;top:7.5px;">2019-09-05</div><div class="dv" style="left:148.5px"></div></div>
<svg style="left:599.6px;top:173.9px;width:16px;height:18px" viewBox="0 0 16 18" ><rect x="0.95" y="1.65" width="14" height="15.3" rx="1" fill="none" stroke="#333" stroke-width="1.3"/><rect x="0.3" y="1.1" width="15.3" height="2.4" fill="#333"/><rect x="1.3" y="0" width="3" height="1.8" rx="0.8" fill="#555"/><rect x="11.1" y="0" width="3" height="1.8" rx="0.8" fill="#555"/><circle cx="4.05" cy="6.2" r="1.45" fill="#222"/><circle cx="4.05" cy="9.9" r="1.45" fill="#222"/><circle cx="4.05" cy="13.7" r="1.45" fill="#222"/><circle cx="7.9" cy="6.2" r="1.45" fill="#222"/><circle cx="7.9" cy="9.9" r="1.45" fill="#222"/><circle cx="7.9" cy="13.7" r="1.45" fill="#222"/><circle cx="11.6" cy="6.2" r="1.45" fill="#222"/><circle cx="11.6" cy="9.9" r="1.45" fill="#222"/><circle cx="11.6" cy="13.7" r="1.45" fill="#222"/></svg>
<svg style="left:879.2px;top:174px;width:16px;height:18px" viewBox="0 0 16 18" ><rect x="0.95" y="1.65" width="14" height="15.3" rx="1" fill="none" stroke="#333" stroke-width="1.3"/><rect x="0.3" y="1.1" width="15.3" height="2.4" fill="#333"/><rect x="1.3" y="0" width="3" height="1.8" rx="0.8" fill="#555"/><rect x="11.1" y="0" width="3" height="1.8" rx="0.8" fill="#555"/><circle cx="4.05" cy="6.2" r="1.45" fill="#222"/><circle cx="4.05" cy="9.9" r="1.45" fill="#222"/><circle cx="4.05" cy="13.7" r="1.45" fill="#222"/><circle cx="7.9" cy="6.2" r="1.45" fill="#222"/><circle cx="7.9" cy="9.9" r="1.45" fill="#222"/><circle cx="7.9" cy="13.7" r="1.45" fill="#222"/><circle cx="11.6" cy="6.2" r="1.45" fill="#222"/><circle cx="11.6" cy="9.9" r="1.45" fill="#222"/><circle cx="11.6" cy="13.7" r="1.45" fill="#222"/></svg>
<div class="inp" style="left:1613px;top:160.7px;width:369px;height:42px;"><div class="tx" style="left:15.5px;top:7px;color:#8a8a8a;">Filter Results</div></div>
<table class="dt"><colgroup><col style="width:52px"><col style="width:132px"><col style="width:93px"><col style="width:99px"><col style="width:100px"><col style="width:79px"><col style="width:101px"><col style="width:124px"><col style="width:127px"><col style="width:138px"><col style="width:108px"><col style="width:150px"><col style="width:118px"><col style="width:262px"></colgroup><thead><tr style="height:93px"><th><div class="in">#<svg class="so" viewBox="0 0 9 12"><path d="M0.2 4.8 H9 L4.6 0.3 Z M0.2 6.7 H9 L4.6 11.3 Z" fill="#b0b0b6"/></svg></div></th><th><div class="in">Name<svg class="so" viewBox="0 0 9 12"><path d="M0.2 4.8 H9 L4.6 0.3 Z M0.2 6.7 H9 L4.6 11.3 Z" fill="#b0b0b6"/></svg></div></th><th class="sorted"><div class="in">Open<br>Count<svg class="so" viewBox="0 0 9 12"><path d="M0.2 2.6 H8.8 L4.5 7.5 Z" fill="#555"/></svg></div></th><th><div class="in">Sheets<svg class="so" viewBox="0 0 9 12"><path d="M0.2 4.8 H9 L4.6 0.3 Z M0.2 6.7 H9 L4.6 11.3 Z" fill="#b0b0b6"/></svg></div></th><th><div class="in">TM1<br>Sheets<svg class="so" viewBox="0 0 9 12"><path d="M0.2 4.8 H9 L4.6 0.3 Z M0.2 6.7 H9 L4.6 11.3 Z" fill="#b0b0b6"/></svg></div></th><th><div class="in">Size<br>(KB)<svg class="so" viewBox="0 0 9 12"><path d="M0.2 4.8 H9 L4.6 0.3 Z M0.2 6.7 H9 L4.6 11.3 Z" fill="#b0b0b6"/></svg></div></th><th><div class="in">VBA<br>Project<svg class="so" viewBox="0 0 9 12"><path d="M0.2 4.8 H9 L4.6 0.3 Z M0.2 6.7 H9 L4.6 11.3 Z" fill="#b0b0b6"/></svg></div></th><th><div class="in">VBA<br>Password<svg class="so" viewBox="0 0 9 12"><path d="M0.2 4.8 H9 L4.6 0.3 Z M0.2 6.7 H9 L4.6 11.3 Z" fill="#b0b0b6"/></svg></div></th><th><div class="in">Is a TM1<br>Workbook<svg class="so" viewBox="0 0 9 12"><path d="M0.2 4.8 H9 L4.6 0.3 Z M0.2 6.7 H9 L4.6 11.3 Z" fill="#b0b0b6"/></svg></div></th><th><div class="in">Has Links<br>to External<br>Workbooks<svg class="so" viewBox="0 0 9 12"><path d="M0.2 4.8 H9 L4.6 0.3 Z M0.2 6.7 H9 L4.6 11.3 Z" fill="#b0b0b6"/></svg></div></th><th><div class="in">Last<br>Opened<svg class="so" viewBox="0 0 9 12"><path d="M0.2 4.8 H9 L4.6 0.3 Z M0.2 6.7 H9 L4.6 11.3 Z" fill="#b0b0b6"/></svg></div></th><th><div class="in">Last Opened<br>By<svg class="so" viewBox="0 0 9 12"><path d="M0.2 4.8 H9 L4.6 0.3 Z M0.2 6.7 H9 L4.6 11.3 Z" fill="#b0b0b6"/></svg></div></th><th><div class="in">Last<br>Windows<br>User<svg class="so" viewBox="0 0 9 12"><path d="M0.2 4.8 H9 L4.6 0.3 Z M0.2 6.7 H9 L4.6 11.3 Z" fill="#b0b0b6"/></svg></div></th><th><div class="in">Path<svg class="so" viewBox="0 0 9 12"><path d="M0.2 4.8 H9 L4.6 0.3 Z M0.2 6.7 H9 L4.6 11.3 Z" fill="#b0b0b6"/></svg></div></th></tr></thead><tbody><tr class="odd" style="height:94.9px"><td>1</td><td><a>Dealer<br>Commission-<br>Version 1.xlsx</a></td><td>316</td><td>6</td><td>5</td><td>1,380</td><td class="c"><svg class="xi" style="position:relative;display:inline-block;width:12px;height:11px;vertical-align:-0.5px" viewBox="0 0 12 11"><path d="M1.7 1.6 L10.3 9.4 M10.3 1.6 L1.7 9.4" stroke="#2b2b2b" stroke-width="3.2" stroke-linecap="round"/></svg></td><td class="c"><svg class="xi" style="position:relative;display:inline-block;width:12px;height:11px;vertical-align:-0.5px" viewBox="0 0 12 11"><path d="M1.7 1.6 L10.3 9.4 M10.3 1.6 L1.7 9.4" stroke="#2b2b2b" stroke-width="3.2" stroke-linecap="round"/></svg></td><td class="c"><svg class="xi" style="position:relative;display:inline-block;width:12px;height:11px;vertical-align:-0.5px" viewBox="0 0 12 11"><path d="M1.7 1.6 L10.3 9.4 M10.3 1.6 L1.7 9.4" stroke="#2b2b2b" stroke-width="3.2" stroke-linecap="round"/></svg></td><td class="c"><svg class="xi" style="position:relative;display:inline-block;width:12px;height:11px;vertical-align:-0.5px" viewBox="0 0 12 11"><path d="M1.7 1.6 L10.3 9.4 M10.3 1.6 L1.7 9.4" stroke="#2b2b2b" stroke-width="3.2" stroke-linecap="round"/></svg></td><td>Last Friday<br>at 5:12 PM</td><td>cxmd:ttgreen</td><td></td><td>\\Finance\Working\Dealer<br>Commission-Version 1.xlsx</td></tr><tr class="even" style="height:118.3px"><td>2</td><td><a>Std<br>Management<br>BS Report.xls-<br>Version 2.xlsx</a></td><td>254</td><td>3</td><td>2</td><td>60</td><td class="c"><svg class="xi" style="position:relative;display:inline-block;width:12px;height:11px;vertical-align:-0.5px" viewBox="0 0 12 11"><path d="M1.7 1.6 L10.3 9.4 M10.3 1.6 L1.7 9.4" stroke="#2b2b2b" stroke-width="3.2" stroke-linecap="round"/></svg></td><td class="c"><svg class="xi" style="position:relative;display:inline-block;width:12px;height:11px;vertical-align:-0.5px" viewBox="0 0 12 11"><path d="M1.7 1.6 L10.3 9.4 M10.3 1.6 L1.7 9.4" stroke="#2b2b2b" stroke-width="3.2" stroke-linecap="round"/></svg></td><td class="c"><svg class="xi" style="position:relative;display:inline-block;width:12px;height:11px;vertical-align:-0.5px" viewBox="0 0 12 11"><path d="M1.7 1.6 L10.3 9.4 M10.3 1.6 L1.7 9.4" stroke="#2b2b2b" stroke-width="3.2" stroke-linecap="round"/></svg></td><td class="c"><svg class="xi" style="position:relative;display:inline-block;width:12px;height:11px;vertical-align:-0.5px" viewBox="0 0 12 11"><path d="M1.7 1.6 L10.3 9.4 M10.3 1.6 L1.7 9.4" stroke="#2b2b2b" stroke-width="3.2" stroke-linecap="round"/></svg></td><td>08/21/2019<br>4:48 PM</td><td>cxmd:mmwatson</td><td></td><td>\\Finance\Working\Std<br>Management BS Report.xls-<br>Version 2.xlsx</td></tr><tr class="odd" style="height:93.4px"><td>3</td><td><a>Board Pack<br>final.final.xlsx</a></td><td>242</td><td>8</td><td>7</td><td>1,564</td><td class="c"><svg class="xi" style="position:relative;display:inline-block;width:12px;height:11px;vertical-align:-0.5px" viewBox="0 0 12 11"><path d="M1.7 1.6 L10.3 9.4 M10.3 1.6 L1.7 9.4" stroke="#2b2b2b" stroke-width="3.2" stroke-linecap="round"/></svg></td><td class="c"><svg class="ci" style="position:relative;display:inline-block;width:17px;height:14px;vertical-align:-1px" viewBox="0 0 17 14"><path d="M11.8 0.7 H3 C1.7 0.7 0.8 1.6 0.8 2.9 V11 C0.8 12.3 1.7 13.2 3 13.2 H11.3 C12.6 13.2 13.5 12.3 13.5 11 V8" fill="none" stroke="#333" stroke-width="1.1"/><path d="M4 6 L7.3 9.3 L15.4 1.6" fill="none" stroke="#2b2b2b" stroke-width="2.8"/></svg></td><td class="c"><svg class="xi" style="position:relative;display:inline-block;width:12px;height:11px;vertical-align:-0.5px" viewBox="0 0 12 11"><path d="M1.7 1.6 L10.3 9.4 M10.3 1.6 L1.7 9.4" stroke="#2b2b2b" stroke-width="3.2" stroke-linecap="round"/></svg></td><td class="c"><svg class="xi" style="position:relative;display:inline-block;width:12px;height:11px;vertical-align:-0.5px" viewBox="0 0 12 11"><path d="M1.7 1.6 L10.3 9.4 M10.3 1.6 L1.7 9.4" stroke="#2b2b2b" stroke-width="3.2" stroke-linecap="round"/></svg></td><td>Last<br>Saturday<br>at 4:52 PM</td><td>cxmd:ffbell</td><td></td><td>\\TM1\Prod\Board Pack<br>final.final.xlsx</td></tr><tr class="even" style="height:117.8px"><td>4</td><td><a>Rental<br>Analysis BU<br>Report-<br>Version 4.xlsx</a></td><td>219</td><td>8</td><td>7</td><td>2,180</td><td class="c"><svg class="xi" style="position:relative;display:inline-block;width:12px;height:11px;vertical-align:-0.5px" viewBox="0 0 12 11"><path d="M1.7 1.6 L10.3 9.4 M10.3 1.6 L1.7 9.4" stroke="#2b2b2b" stroke-width="3.2" stroke-linecap="round"/></svg></td><td class="c"><svg class="xi" style="position:relative;display:inline-block;width:12px;height:11px;vertical-align:-0.5px" viewBox="0 0 12 11"><path d="M1.7 1.6 L10.3 9.4 M10.3 1.6 L1.7 9.4" stroke="#2b2b2b" stroke-width="3.2" stroke-linecap="round"/></svg></td><td class="c"><svg class="xi" style="position:relative;display:inline-block;width:12px;height:11px;vertical-align:-0.5px" viewBox="0 0 12 11"><path d="M1.7 1.6 L10.3 9.4 M10.3 1.6 L1.7 9.4" stroke="#2b2b2b" stroke-width="3.2" stroke-linecap="round"/></svg></td><td class="c"><svg class="xi" style="position:relative;display:inline-block;width:12px;height:11px;vertical-align:-0.5px" viewBox="0 0 12 11"><path d="M1.7 1.6 L10.3 9.4 M10.3 1.6 L1.7 9.4" stroke="#2b2b2b" stroke-width="3.2" stroke-linecap="round"/></svg></td><td>Last<br>Saturday<br>at 3:50 PM</td><td>cxmd:jjthompson</td><td></td><td>\\Finance\Working\Rental<br>Analysis BU Report-Version<br>4.xlsx</td></tr><tr class="odd" style="height:68.9px"><td>5</td><td><a>Tax-Version<br>2.xlsx</a></td><td>189</td><td>8</td><td>7</td><td>1,552</td><td class="c"><svg class="xi" style="position:relative;display:inline-block;width:12px;height:11px;vertical-align:-0.5px" viewBox="0 0 12 11"><path d="M1.7 1.6 L10.3 9.4 M10.3 1.6 L1.7 9.4" stroke="#2b2b2b" stroke-width="3.2" stroke-linecap="round"/></svg></td><td class="c"><svg class="xi" style="position:relative;display:inline-block;width:12px;height:11px;vertical-align:-0.5px" viewBox="0 0 12 11"><path d="M1.7 1.6 L10.3 9.4 M10.3 1.6 L1.7 9.4" stroke="#2b2b2b" stroke-width="3.2" stroke-linecap="round"/></svg></td><td class="c"><svg class="xi" style="position:relative;display:inline-block;width:12px;height:11px;vertical-align:-0.5px" viewBox="0 0 12 11"><path d="M1.7 1.6 L10.3 9.4 M10.3 1.6 L1.7 9.4" stroke="#2b2b2b" stroke-width="3.2" stroke-linecap="round"/></svg></td><td class="c"><svg class="xi" style="position:relative;display:inline-block;width:12px;height:11px;vertical-align:-0.5px" viewBox="0 0 12 11"><path d="M1.7 1.6 L10.3 9.4 M10.3 1.6 L1.7 9.4" stroke="#2b2b2b" stroke-width="3.2" stroke-linecap="round"/></svg></td><td>08/29/2019</td><td>cxmd:ccwhite</td><td></td><td>\\Finance\shared\Group\Tax-<br>Version 2.xlsx</td></tr><tr class="even" style="height:118.1px"><td>6</td><td><a>Rental<br>Analysis BU<br>Report-<br>Version 2.xlsx</a></td><td>171</td><td>8</td><td>7</td><td>1,590</td><td class="c"><svg class="xi" style="position:relative;display:inline-block;width:12px;height:11px;vertical-align:-0.5px" viewBox="0 0 12 11"><path d="M1.7 1.6 L10.3 9.4 M10.3 1.6 L1.7 9.4" stroke="#2b2b2b" stroke-width="3.2" stroke-linecap="round"/></svg></td><td class="c"><svg class="xi" style="position:relative;display:inline-block;width:12px;height:11px;vertical-align:-0.5px" viewBox="0 0 12 11"><path d="M1.7 1.6 L10.3 9.4 M10.3 1.6 L1.7 9.4" stroke="#2b2b2b" stroke-width="3.2" stroke-linecap="round"/></svg></td><td class="c"><svg class="xi" style="position:relative;display:inline-block;width:12px;height:11px;vertical-align:-0.5px" viewBox="0 0 12 11"><path d="M1.7 1.6 L10.3 9.4 M10.3 1.6 L1.7 9.4" stroke="#2b2b2b" stroke-width="3.2" stroke-linecap="round"/></svg></td><td class="c"><svg class="xi" style="position:relative;display:inline-block;width:12px;height:11px;vertical-align:-0.5px" viewBox="0 0 12 11"><path d="M1.7 1.6 L10.3 9.4 M10.3 1.6 L1.7 9.4" stroke="#2b2b2b" stroke-width="3.2" stroke-linecap="round"/></svg></td><td>08/24/2019<br>2:13 PM</td><td>cxmd:jjthompson</td><td></td><td>\\Finance\Working\Rental<br>Analysis BU Report-Version<br>2.xlsx</td></tr><tr class="odd" style="height:68.5px"><td>7</td><td><a>Payable rec-<br>Version 2.xlsx</a></td><td>161</td><td>4</td><td>3</td><td>1,548</td><td class="c"><svg class="xi" style="position:relative;display:inline-block;width:12px;height:11px;vertical-align:-0.5px" viewBox="0 0 12 11"><path d="M1.7 1.6 L10.3 9.4 M10.3 1.6 L1.7 9.4" stroke="#2b2b2b" stroke-width="3.2" stroke-linecap="round"/></svg></td><td class="c"><svg class="xi" style="position:relative;display:inline-block;width:12px;height:11px;vertical-align:-0.5px" viewBox="0 0 12 11"><path d="M1.7 1.6 L10.3 9.4 M10.3 1.6 L1.7 9.4" stroke="#2b2b2b" stroke-width="3.2" stroke-linecap="round"/></svg></td><td class="c"><svg class="xi" style="position:relative;display:inline-block;width:12px;height:11px;vertical-align:-0.5px" viewBox="0 0 12 11"><path d="M1.7 1.6 L10.3 9.4 M10.3 1.6 L1.7 9.4" stroke="#2b2b2b" stroke-width="3.2" stroke-linecap="round"/></svg></td><td class="c"><svg class="xi" style="position:relative;display:inline-block;width:12px;height:11px;vertical-align:-0.5px" viewBox="0 0 12 11"><path d="M1.7 1.6 L10.3 9.4 M10.3 1.6 L1.7 9.4" stroke="#2b2b2b" stroke-width="3.2" stroke-linecap="round"/></svg></td><td>08/17/2019<br>3:53 PM</td><td>cxmd:ffharris</td><td></td><td>\\TM1\Prod\Payable rec-<br>Version 2.xlsx</td></tr><tr class="even" style="height:118.3px"><td>8</td><td><a>Std<br>Management<br>BS Report.xls-<br>Version 1.xlsx</a></td><td>149</td><td>3</td><td>2</td><td>60</td><td class="c"><svg class="xi" style="position:relative;display:inline-block;width:12px;height:11px;vertical-align:-0.5px" viewBox="0 0 12 11"><path d="M1.7 1.6 L10.3 9.4 M10.3 1.6 L1.7 9.4" stroke="#2b2b2b" stroke-width="3.2" stroke-linecap="round"/></svg></td><td class="c"><svg class="xi" style="position:relative;display:inline-block;width:12px;height:11px;vertical-align:-0.5px" viewBox="0 0 12 11"><path d="M1.7 1.6 L10.3 9.4 M10.3 1.6 L1.7 9.4" stroke="#2b2b2b" stroke-width="3.2" stroke-linecap="round"/></svg></td><td class="c"><svg class="xi" style="position:relative;display:inline-block;width:12px;height:11px;vertical-align:-0.5px" viewBox="0 0 12 11"><path d="M1.7 1.6 L10.3 9.4 M10.3 1.6 L1.7 9.4" stroke="#2b2b2b" stroke-width="3.2" stroke-linecap="round"/></svg></td><td class="c"><svg class="xi" style="position:relative;display:inline-block;width:12px;height:11px;vertical-align:-0.5px" viewBox="0 0 12 11"><path d="M1.7 1.6 L10.3 9.4 M10.3 1.6 L1.7 9.4" stroke="#2b2b2b" stroke-width="3.2" stroke-linecap="round"/></svg></td><td>08/16/2019<br>4:12 PM</td><td>cxmd:mmwatson</td><td></td><td>\\Finance\Working\Std<br>Management BS Report.xls-<br>Version 1.xlsx</td></tr><tr class="odd" style="height:93.4px"><td>9</td><td><a>Maintenance<br>Financials<br>final2.xlsx</a></td><td>136</td><td>1</td><td>1</td><td>49</td><td class="c"><svg class="xi" style="position:relative;display:inline-block;width:12px;height:11px;vertical-align:-0.5px" viewBox="0 0 12 11"><path d="M1.7 1.6 L10.3 9.4 M10.3 1.6 L1.7 9.4" stroke="#2b2b2b" stroke-width="3.2" stroke-linecap="round"/></svg></td><td class="c"><svg class="ci" style="position:relative;display:inline-block;width:17px;height:14px;vertical-align:-1px" viewBox="0 0 17 14"><path d="M11.8 0.7 H3 C1.7 0.7 0.8 1.6 0.8 2.9 V11 C0.8 12.3 1.7 13.2 3 13.2 H11.3 C12.6 13.2 13.5 12.3 13.5 11 V8" fill="none" stroke="#333" stroke-width="1.1"/><path d="M4 6 L7.3 9.3 L15.4 1.6" fill="none" stroke="#2b2b2b" stroke-width="2.8"/></svg></td><td class="c"><svg class="xi" style="position:relative;display:inline-block;width:12px;height:11px;vertical-align:-0.5px" viewBox="0 0 12 11"><path d="M1.7 1.6 L10.3 9.4 M10.3 1.6 L1.7 9.4" stroke="#2b2b2b" stroke-width="3.2" stroke-linecap="round"/></svg></td><td class="c"><svg class="xi" style="position:relative;display:inline-block;width:12px;height:11px;vertical-align:-0.5px" viewBox="0 0 12 11"><path d="M1.7 1.6 L10.3 9.4 M10.3 1.6 L1.7 9.4" stroke="#2b2b2b" stroke-width="3.2" stroke-linecap="round"/></svg></td><td>08/29/2019</td><td>cxmd:eejones</td><td></td><td>\\Finance\Pub\Maintenance<br>Financials final2.xlsx</td></tr></tbody></table>
<svg style="left:174px;top:596px;width:26px;height:32px" viewBox="0 0 26 32" ><defs><filter id="csh" x="-30%" y="-30%" width="160%" height="160%"><feGaussianBlur stdDeviation="0.9"/></filter></defs><path d="M8.1 19.3 V2.2 C8.1 0.9 9.1 0 10.3 0 C11.5 0 12.5 0.9 12.5 2.2 V10 C12.5 8.8 13.4 8 14.45 8 C15.5 8 16.4 8.8 16.4 10 V11 C16.4 9.8 17.3 9 18.35 9 C19.4 9 20.3 9.8 20.3 11 V12 C20.3 10.8 21.3 10 22.4 10 C23.6 10 24.6 10.9 24.6 12.2 V24 C24.6 28.5 21.5 31.5 16.5 31.5 H15 C12.5 31.5 10.5 30.5 9 28.8 L0.8 19.5 C-0.2 18.3 0.5 16.2 2.3 16.2 C3.5 16.2 5.5 16.8 8.1 19.3 Z" fill="rgba(0,0,0,0.25)" filter="url(#csh)" transform="translate(1.2 1.2)"/><path d="M8.1 19.3 V2.2 C8.1 0.9 9.1 0 10.3 0 C11.5 0 12.5 0.9 12.5 2.2 V10 C12.5 8.8 13.4 8 14.45 8 C15.5 8 16.4 8.8 16.4 10 V11 C16.4 9.8 17.3 9 18.35 9 C19.4 9 20.3 9.8 20.3 11 V12 C20.3 10.8 21.3 10 22.4 10 C23.6 10 24.6 10.9 24.6 12.2 V24 C24.6 28.5 21.5 31.5 16.5 31.5 H15 C12.5 31.5 10.5 30.5 9 28.8 L0.8 19.5 C-0.2 18.3 0.5 16.2 2.3 16.2 C3.5 16.2 5.5 16.8 8.1 19.3 Z" fill="#fff" stroke="#222" stroke-width="1.3" stroke-linejoin="round"/><path d="M12.5 10 V15 M16.4 11 V15 M20.3 12 V15" stroke="#222" stroke-width="1.3" stroke-linecap="round"/></svg>
<div id="wm1">Activate Windows</div>
<div id="wm2">Go to Settings to activate Windows</div></body></html>
